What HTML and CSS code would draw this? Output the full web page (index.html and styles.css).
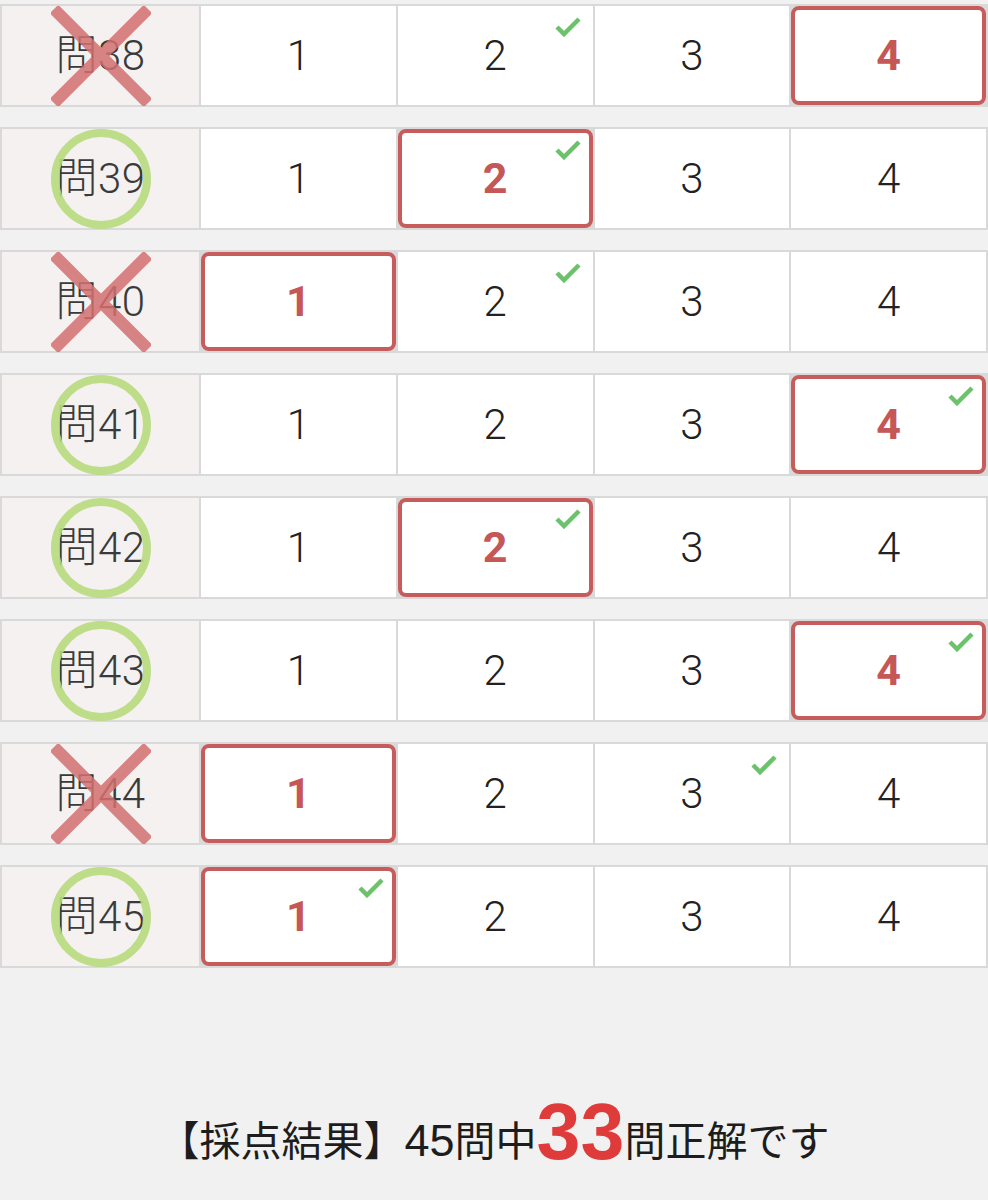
FILE: index.html
```html
<!DOCTYPE html>
<html lang="ja">
<head>
<meta charset="utf-8">
<title>採点結果</title>
<link rel="stylesheet" href="styles.css">
</head>
<body>
<main class="sheet">
  <div class="row">
    <div class="q"><span class="qlabel">問38</span><svg class="mark cross" viewBox="0 0 100 100"><path d="M3 3 L97 97 M97 3 L3 97"/></svg></div>
    <div class="opt">1</div>
    <div class="opt">2<svg class="check" viewBox="0 0 26 20"><path d="M2 10 L9 17 L24 2"/></svg></div>
    <div class="opt">3</div>
    <div class="opt sel">4</div>
  </div>
  <div class="row">
    <div class="q"><span class="qlabel">問39</span><span class="mark circle"></span></div>
    <div class="opt">1</div>
    <div class="opt sel">2<svg class="check" viewBox="0 0 26 20"><path d="M2 10 L9 17 L24 2"/></svg></div>
    <div class="opt">3</div>
    <div class="opt">4</div>
  </div>
  <div class="row">
    <div class="q"><span class="qlabel">問40</span><svg class="mark cross" viewBox="0 0 100 100"><path d="M3 3 L97 97 M97 3 L3 97"/></svg></div>
    <div class="opt sel">1</div>
    <div class="opt">2<svg class="check" viewBox="0 0 26 20"><path d="M2 10 L9 17 L24 2"/></svg></div>
    <div class="opt">3</div>
    <div class="opt">4</div>
  </div>
  <div class="row">
    <div class="q"><span class="qlabel">問41</span><span class="mark circle"></span></div>
    <div class="opt">1</div>
    <div class="opt">2</div>
    <div class="opt">3</div>
    <div class="opt sel">4<svg class="check" viewBox="0 0 26 20"><path d="M2 10 L9 17 L24 2"/></svg></div>
  </div>
  <div class="row">
    <div class="q"><span class="qlabel">問42</span><span class="mark circle"></span></div>
    <div class="opt">1</div>
    <div class="opt sel">2<svg class="check" viewBox="0 0 26 20"><path d="M2 10 L9 17 L24 2"/></svg></div>
    <div class="opt">3</div>
    <div class="opt">4</div>
  </div>
  <div class="row">
    <div class="q"><span class="qlabel">問43</span><span class="mark circle"></span></div>
    <div class="opt">1</div>
    <div class="opt">2</div>
    <div class="opt">3</div>
    <div class="opt sel">4<svg class="check" viewBox="0 0 26 20"><path d="M2 10 L9 17 L24 2"/></svg></div>
  </div>
  <div class="row">
    <div class="q"><span class="qlabel">問44</span><svg class="mark cross" viewBox="0 0 100 100"><path d="M3 3 L97 97 M97 3 L3 97"/></svg></div>
    <div class="opt sel">1</div>
    <div class="opt">2</div>
    <div class="opt">3<svg class="check" viewBox="0 0 26 20"><path d="M2 10 L9 17 L24 2"/></svg></div>
    <div class="opt">4</div>
  </div>
  <div class="row">
    <div class="q"><span class="qlabel">問45</span><span class="mark circle"></span></div>
    <div class="opt sel">1<svg class="check" viewBox="0 0 26 20"><path d="M2 10 L9 17 L24 2"/></svg></div>
    <div class="opt">2</div>
    <div class="opt">3</div>
    <div class="opt">4</div>
  </div>
</main>
<p class="result">【採点結果】<span class="num">45</span>問中<strong class="score">33</strong>問正解です</p>
</body>
</html>
```
FILE: styles.css
```css
html, body {
  margin: 0;
  padding: 0;
  background: #f1f1f1;
}
body {
  font-family: "Noto Sans CJK JP", "Noto Sans", sans-serif;
  color: #333;
}
.sheet {
  display: flex;
  flex-direction: column;
  gap: 20px;
  padding-top: 4px;
}
.row {
  display: grid;
  grid-template-columns: 197px repeat(4, 1fr);
  gap: 2px;
  padding: 2px;
  background: #d9d9d9;
  height: 103px;
  box-sizing: border-box;
}
.q, .opt {
  position: relative;
  display: flex;
  align-items: center;
  justify-content: center;
  font-family: Roboto, "Noto Sans CJK JP", sans-serif;
  font-size: 42px;
  font-weight: 300;
  line-height: 1;
}
.q {
  background: #f5f1f0;
  color: #3a3a3a;
}
.qlabel {
  letter-spacing: 0.5px;
}
.opt {
  background: #fff;
  color: #222;
}
.opt.sel {
  border: 4px solid #c75c5c;
  border-radius: 8px;
  color: #c55757;
  font-weight: 700;
  font-size: 43px;
}
.check {
  position: absolute;
  top: 11px;
  right: 12px;
  width: 26px;
  height: 20px;
  fill: none;
  stroke: #6cc26a;
  stroke-width: 4.5;
}
.opt.sel .check {
  top: 7px;
  right: 8px;
}
.mark {
  position: absolute;
  left: 50%;
  top: 50%;
  width: 100px;
  height: 100px;
  transform: translate(-50%, -50%);
  box-sizing: border-box;
}
.circle {
  border: 8px solid #b7da7c;
  border-radius: 50%;
  opacity: 0.9;
}
.cross {
  fill: none;
  stroke: #d47070;
  stroke-width: 12;
  opacity: 0.85;
}
.result {
  margin: 124px 0 0;
  text-align: center;
  font-family: "Liberation Sans", "Noto Sans CJK JP", sans-serif;
  font-size: 41px;
  line-height: 80px;
  color: #1d1d1d;
  font-weight: 400;
}
.num {
  font-size: 45px;
}
.score {
  font-size: 79px;
  color: #e03b3b;
  font-weight: 700;
  vertical-align: -3px;
}
```
